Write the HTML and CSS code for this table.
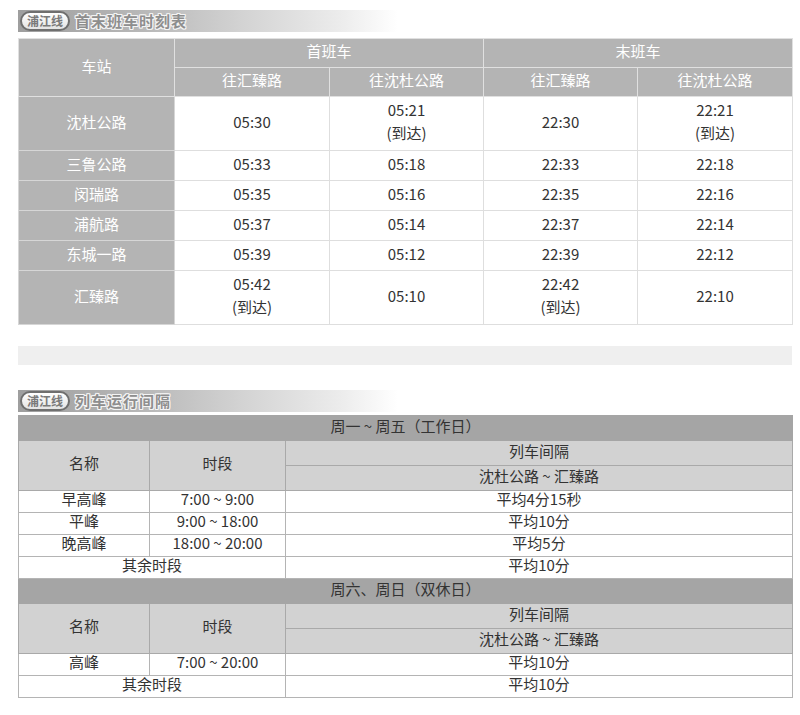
FILE: index.html
```html
<!DOCTYPE html>
<html lang="zh-CN">
<head>
<meta charset="utf-8">
<link rel="stylesheet" href="styles.css">
</head>
<body>
<div class="page">
  <div class="banner">
    <span class="pill">浦江线</span>
    <span class="btitle">首末班车时刻表</span>
  </div>
  <table class="t1">
    <colgroup><col class="c1"><col class="c2"><col class="c3"><col class="c4"><col class="c5"></colgroup>
    <tr class="h1"><th rowspan="2" class="st">车站</th><th colspan="2">首班车</th><th colspan="2">末班车</th></tr>
    <tr class="h2"><th>往汇臻路</th><th>往沈杜公路</th><th>往汇臻路</th><th>往沈杜公路</th></tr>
    <tr class="tall"><th class="st">沈杜公路</th><td>05:30</td><td>05:21<br>(到达)</td><td>22:30</td><td>22:21<br>(到达)</td></tr>
    <tr class="r"><th class="st">三鲁公路</th><td>05:33</td><td>05:18</td><td>22:33</td><td>22:18</td></tr>
    <tr class="r"><th class="st">闵瑞路</th><td>05:35</td><td>05:16</td><td>22:35</td><td>22:16</td></tr>
    <tr class="r"><th class="st">浦航路</th><td>05:37</td><td>05:14</td><td>22:37</td><td>22:14</td></tr>
    <tr class="r"><th class="st">东城一路</th><td>05:39</td><td>05:12</td><td>22:39</td><td>22:12</td></tr>
    <tr class="tall"><th class="st">汇臻路</th><td>05:42<br>(到达)</td><td>05:10</td><td>22:42<br>(到达)</td><td>22:10</td></tr>
  </table>
  <div class="bar"></div>
  <div class="banner b2">
    <span class="pill">浦江线</span>
    <span class="btitle">列车运行间隔</span>
  </div>
  <table class="t2">
    <colgroup><col class="d1"><col class="d2"><col class="d3"></colgroup>
    <tr class="day"><td colspan="3">周一 ~ 周五（工作日）</td></tr>
    <tr class="hd"><td rowspan="2">名称</td><td rowspan="2">时段</td><td>列车间隔</td></tr>
    <tr class="hd"><td>沈杜公路 ~ 汇臻路</td></tr>
    <tr class="rw"><td>早高峰</td><td>7:00 ~ 9:00</td><td>平均4分15秒</td></tr>
    <tr class="rw"><td>平峰</td><td>9:00 ~ 18:00</td><td>平均10分</td></tr>
    <tr class="rw"><td>晚高峰</td><td>18:00 ~ 20:00</td><td>平均5分</td></tr>
    <tr class="rw"><td colspan="2">其余时段</td><td>平均10分</td></tr>
    <tr class="day"><td colspan="3">周六、周日（双休日）</td></tr>
    <tr class="hd"><td rowspan="2">名称</td><td rowspan="2">时段</td><td>列车间隔</td></tr>
    <tr class="hd"><td>沈杜公路 ~ 汇臻路</td></tr>
    <tr class="rw"><td>高峰</td><td>7:00 ~ 20:00</td><td>平均10分</td></tr>
    <tr class="rw"><td colspan="2">其余时段</td><td>平均10分</td></tr>
  </table>
</div>
</body>
</html>
```

FILE: styles.css
```css
html, body {
  margin: 0;
  padding: 0;
  background: #ffffff;
}
.page {
  padding: 10px 0 0 18px;
  width: 774px;
  font-family: "Noto Sans CJK SC", "Noto Sans", sans-serif;
}
.banner {
  width: 380px;
  height: 22px;
  display: flex;
  align-items: center;
  gap: 5px;
  background: linear-gradient(to right, #9e9e9e 0%, #bababa 35%, #d4d4d4 60%, #ececec 85%, #ffffff 100%);
}
.pill {
  margin-left: 2px;
  height: 16px;
  padding: 0 5px;
  border: 2px solid #6f6f6f;
  border-radius: 10px;
  background: linear-gradient(#ffffff, #e4e4e4);
  color: #7a7a7a;
  font-size: 12px;
  font-weight: bold;
  line-height: 16px;
}
.btitle {
  font-size: 15px;
  font-weight: bold;
  color: #8e8e8e;
  text-shadow: 1px 0 #f4f4f4, -1px 0 #f4f4f4, 0 1px #f4f4f4, 0 -1px #f4f4f4,
               1px 1px #f4f4f4, -1px -1px #f4f4f4, 1px -1px #f4f4f4, -1px 1px #f4f4f4;
  letter-spacing: 1px;
  line-height: 22px;
}
.t1 {
  margin-top: 6px;
  width: 774px;
  border-collapse: collapse;
  table-layout: fixed;
  font-size: 15px;
  border: 1px solid #dcdcdc;
}
.c1 { width: 156px; }
.c2 { width: 155px; }
.c3 { width: 154px; }
.c4 { width: 154px; }
.c5 { width: 155px; }
.t1 th, .t1 td {
  text-align: center;
  padding: 0 0 5px 0;
  line-height: 23px;
}
.t1 th {
  background: #b4b4b4;
  color: #ffffff;
  font-weight: normal;
  border: 1px solid #d6d6d6;
}
.t1 .h1 th, .t1 .h2 th {
  border-color: #e0e0e0;
}
.t1 td {
  color: #333333;
  border: 1px solid #dedede;
  background: #ffffff;
}
.t1 .h1 { height: 28px; }
.t1 .h2 { height: 29px; }
.t1 .tall { height: 54px; }
.t1 .r { height: 30px; }
.bar {
  margin-top: 21px;
  height: 19px;
  background: #efefef;
}
.b2 {
  margin-top: 25px;
}
.t2 {
  margin-top: 3px;
  width: 774px;
  border-collapse: collapse;
  table-layout: fixed;
  font-size: 15px;
  color: #333333;
  border: 1px solid #b8b8b8;
}
.d1 { width: 131px; }
.d2 { width: 136px; }
.d3 { width: 507px; }
.t2 td {
  text-align: center;
  padding: 0 0 5px 0;
  line-height: 16px;
  border: 1px solid #b4b4b4;
}
.t2 .day td {
  background: #a5a5a5;
  border-color: #a5a5a5;
  height: 19px;
}
.t2 .hd td {
  background: #d2d2d2;
  border-color: #a9a9a9;
  height: 19px;
}
.t2 .rw td {
  background: #ffffff;
  height: 16px;
}
```
